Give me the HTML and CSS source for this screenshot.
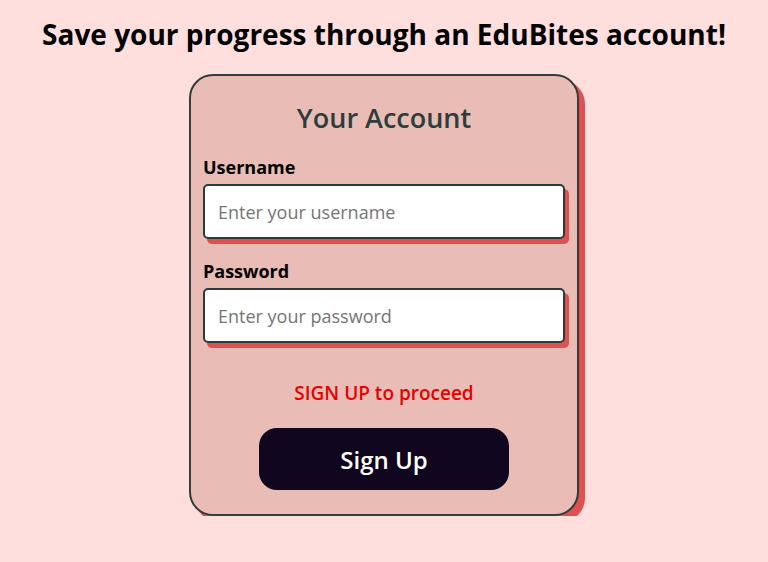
FILE: index.html
```html
<!DOCTYPE html>
<html lang="en">
<head>
  <meta charset="UTF-8" />
  <meta name="viewport" content="width=device-width, initial-scale=1" />
  <title>EduBites - Your Account</title>
  <link rel="stylesheet" href="styles.css">
</head>
<body>
  <h1>Save your progress through an EduBites account!</h1>

  <div class="account-card">
    <h2>Your Account</h2>
    <label for="username">Username</label>
    <input type="text" id="username" placeholder="Enter your username" />
    <label for="password">Password</label>
    <input type="password" id="password" placeholder="Enter your password" />
    <p class="notice">SIGN UP to proceed</p>
    <button class="signup-btn">Sign Up</button>
  </div>
</body>
</html>
```

FILE: styles.css
```css
body {
  margin: 0;
  font-family: "Open Sans", "DejaVu Sans", sans-serif;
  background: #ffdede;
  display: flex;
  flex-direction: column;
  align-items: center;
  color: black;
}
h1 {
  font-size: 28px;
  font-weight: bold;
  margin: 16px 0 22px;
  line-height: 36px;
}
.account-card {
  width: 362px;
  padding: 26px 12px 24px;
  background: #e9bdb6;
  border: 2px solid #333d3d;
  border-radius: 24px;
  box-shadow: 6px 6px 0 #e05050;
  display: flex;
  flex-direction: column;
}
.account-card h2 {
  margin: 0 0 22px;
  text-align: center;
  font-size: 27px;
  font-weight: 600;
  color: #2b3d3d;
  line-height: 32px;
}
label {
  font-weight: bold;
  font-size: 18px;
  line-height: 22px;
  margin-bottom: 6px;
}
input {
  box-sizing: border-box;
  height: 55px;
  padding: 0 13px;
  font-family: inherit;
  font-size: 18px;
  border: 2px solid #2b3b3b;
  border-radius: 5px;
  box-shadow: 4px 5px 0 #e05050;
  margin-bottom: 21px;
  background: white;
}
input::placeholder {
  color: #757575;
}
.notice {
  margin: 17px 0 23px;
  text-align: center;
  color: #e60000;
  font-size: 19px;
  font-weight: 600;
  line-height: 24px;
}
.signup-btn {
  align-self: center;
  width: 250px;
  height: 62px;
  background: #10061f;
  color: white;
  border: none;
  border-radius: 18px;
  font-family: inherit;
  font-size: 24px;
  font-weight: 600;
  cursor: pointer;
}
```
